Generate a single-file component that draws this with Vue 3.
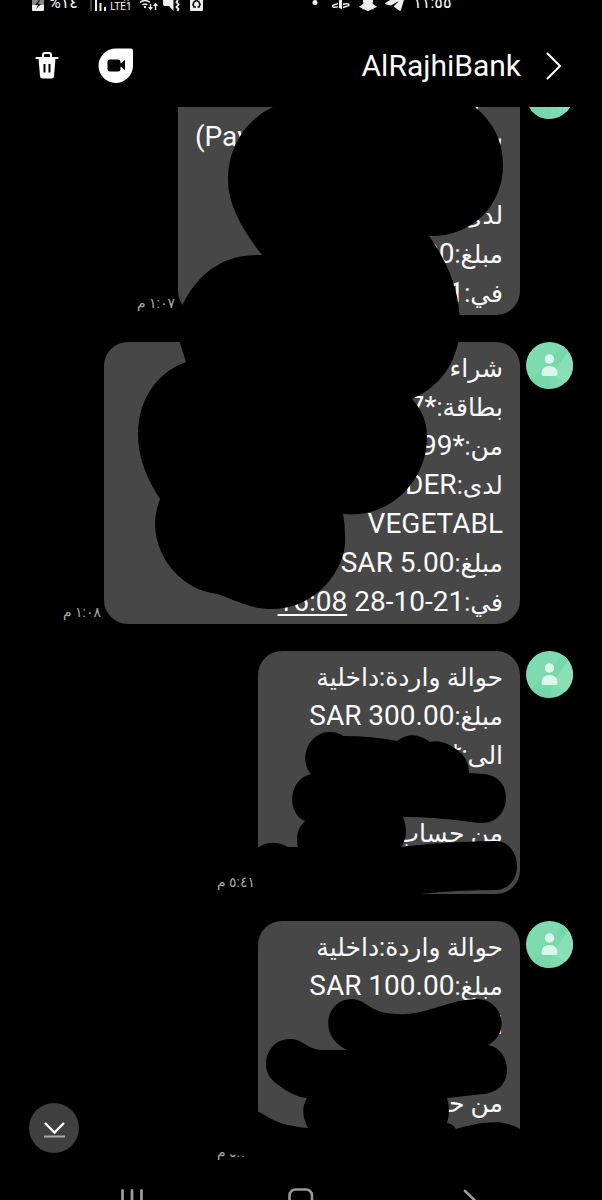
<script setup>
const messages = [
  {
    size: 'medium',
    time: '١:٠٧ م',
    lines: [
      { label: 'شراء' },
      { label: 'بطاقة', end: 'Pay)' },
      {},
      { label: 'لدى' },
      { label: 'مبلغ:', value: '00' },
      { label: 'في:', value: '21' },
    ],
  },
  {
    size: 'large',
    time: '١:٠٨ م',
    lines: [
      { label: 'شراء' },
      { label: 'بطاقة:', value: '*7' },
      { label: 'من:', value: '*99' },
      { label: 'لدى:', value: 'DER' },
      { value: 'VEGETABL' },
      { label: 'مبلغ:', value: 'SAR 5.00' },
      { label: 'في:', value: '21-10-28 ', link: '16:08' },
    ],
  },
  {
    size: 'small',
    time: '٥:٤١ م',
    lines: [
      { label: 'حوالة واردة:داخلية' },
      { label: 'مبلغ:', value: 'SAR 300.00' },
      { label: 'الى:', value: '*' },
      {},
      { label: 'من حساب' },
      {},
    ],
  },
  {
    size: 'small',
    time: '٥:٤٢ م',
    lines: [
      { label: 'حوالة واردة:داخلية' },
      { label: 'مبلغ:', value: 'SAR 100.00' },
      { label: 'الى:', value: '*' },
      {},
      { label: 'من حساب' },
      {},
    ],
  },
]
</script>

<template>
  <div class="screen">
    <div class="status">
      <div class="status-group">
        <svg width="12" height="12" viewBox="0 0 12 12"><path d="M0 0h12v10q0 1-1 1H1q-1 0-1-1z" fill="#eee"/><path d="M0 0h12v5H0z" fill="#888"/><path d="M7 0 3 5h3L4 9l5-5H6l2-4z" fill="#111"/></svg>
        <span class="status-text battery">%١٤</span>
        <svg class="signal" width="17" height="12" viewBox="0 0 17 12"><path d="M1 0v11" stroke="#555" stroke-width="1.500"/><path d="M6 0v11M10.500 3v8M15 7v4" stroke="#eee" stroke-width="2"/></svg>
        <span class="lte"><span>Vo))</span><span>LTE1</span></span>
        <svg class="wifi" width="18" height="12" viewBox="0 0 18 12"><path d="M0 2.500q5-4 10 0M2.500 5q2.500-2 5 0" fill="none" stroke="#eee" stroke-width="1.600"/><circle cx="5" cy="7" r="1.200" fill="#eee"/><path d="M10.500 4v5M15.500 10V5" stroke="#eee" stroke-width="1.400"/><path d="M8 7h5l-2.500 3.500zM13 6h5l-2.500-3.500z" fill="#eee"/></svg>
        <svg class="mute" width="18" height="12" viewBox="0 0 18 12"><path d="M0 0h10.500v11L6 6H1.500Q0 6 0 4z" fill="#eee"/><path d="M15 0l-1.500 2 2 2.500-2 2.500 2 2-1 2" fill="none" stroke="#eee" stroke-width="1.800"/></svg>
        <svg class="saver" width="13" height="12" viewBox="0 0 13 12"><path d="M0 0h13v10q0 1-1 1H1q-1 0-1-1z" fill="#eee"/><path d="M4.500 1 3 4.500 4 7h2M8.500 1 10 4.500 9 7H7.500M5 1.500 6.500 0 8 1.500" fill="none" stroke="#111" stroke-width="1.700"/></svg>
      </div>
      <div class="status-group">
        <svg class="dot" width="6" height="12" viewBox="0 0 6 12"><circle cx="3" cy="2.500" r="2.500" fill="#eee"/></svg>
        <svg class="ps" width="18" height="12" viewBox="0 0 18 12"><path d="M7 0v8l3 1V0z" fill="#eee"/><path d="M6 3.500 1 5.300Q-.500 6.500 2 7.200q2 .300 4-.600M11 7.500l5-1.600q2-1.200 0-2-2.500-.400-5 .400" fill="none" stroke="#eee" stroke-width="1.500"/></svg>
        <svg class="snap" width="18" height="12" viewBox="0 0 18 12"><path d="M4 0h10q.500 2-.500 3 1 2.500 4.500 3.500-.500 1.300-3 1.500l-.500 1.200q-2.200-.200-3.300.800-2.200 2-4.400 0-1.100-1-3.300-.800L3 8Q.500 7.800 0 6.500 3.500 5.500 4.500 3 3.500 2 4 0z" fill="#eee"/></svg>
        <svg class="telegram" width="19" height="12" viewBox="0 0 19 12"><path d="M5 0h14l-3 10q-.600 1.500-1.800.600L8.500 6.500 14 1 6 5.500.500 4.300Q-.500 3.700 1 2.500z" fill="#eee"/></svg>
        <span class="status-text clock">١١:٥٥</span>
      </div>
    </div>

    <header class="header">
      <div class="actions">
        <button class="icon-button" aria-label="حذف">
          <svg width="24" height="27" viewBox="0 0 24 27"><path d="M8 5V3q0-2 2-2h4q2 0 2 2v2" fill="none" stroke="#fff" stroke-width="2"/><path d="M1.500 6h21" stroke="#fff" stroke-width="2.200" stroke-linecap="round"/><path d="M3.500 6h17L19 24q-.300 2.500-2.500 2.500h-9Q5.300 26.500 5 24z" fill="#fff"/><path d="M9.500 12v8.500M14.500 12v8.500" stroke="#000" stroke-width="2"/></svg>
        </button>
        <button class="icon-button" aria-label="مكالمة فيديو">
          <svg width="36" height="36" viewBox="0 0 36 36"><path d="M18 .500h14.500q2.500 0 2.500 2.500v15A17.250 17.250 0 1 1 18 .500z" fill="#fff"/><path d="M12 11.500h8q2.500 0 2.500 2.500v1.500l4.500-3.500v10l-4.500-3.500V21q0 2.500-2.500 2.500h-8Q9.500 23.500 9.500 21v-7q0-2.500 2.500-2.500z" fill="#000"/></svg>
        </button>
      </div>
      <div class="contact">
        <h1 class="title">AlRajhiBank</h1>
        <button class="icon-button" aria-label="رجوع">
          <svg width="16" height="28" viewBox="0 0 16 28"><path d="m1.500 1.500 12.500 12.500L1.500 26.500" fill="none" stroke="#fff" stroke-width="2" stroke-linecap="round" stroke-linejoin="round"/></svg>
        </button>
      </div>
    </header>

    <main class="thread">
      <ul class="messages" dir="rtl">
        <li v-for="(m, i) in messages" :key="i" class="message">
          <svg class="avatar" viewBox="0 0 47 47" aria-hidden="true">
            <circle cx="23.500" cy="23.500" r="23.500" fill="#7edbb0"/>
            <path d="M37 4.200A23.500 23.500 0 0 1 40 40.200Q34 40 28 33z" fill="#8bdfb7"/>
            <path d="M37 4.200 5 38A23.500 23.500 0 0 0 24 47L26 34 42 9z" fill="#76d8aa"/>
            <circle cx="23.500" cy="17" r="4.700" fill="#dcf7e9"/>
            <path d="M15.500 31.500q0-7.500 8-7.500t8 7.500q0 2.500-2.500 2.500H18q-2.500 0-2.500-2.500z" fill="#dcf7e9"/>
          </svg>
          <div class="bubble" :class="m.size">
            <p v-for="(line, n) in m.lines" :key="n" class="line">
              <span><span class="label">{{ line.label }}</span>{{ line.value }}<a v-if="line.link" href="#" class="link">{{ line.link }}</a></span>
              <span v-if="line.end">{{ line.end }}</span>
            </p>
          </div>
          <time class="time">{{ m.time }}</time>
        </li>
      </ul>
      <svg class="marker" width="602" height="1057" viewBox="0 107 602 1057" aria-hidden="true">
        <path d="M273 107C245 120 228 148 228 180C228 206 243 230 262 255C218 253 194 280 182 306Q178 324 180 343L186 362C155 373 138 402 138 434C138 458 147 479 160 499Q155 512 155 525C156 560 184 591 218 594C236 601 252 609 272 609C318 609 348 566 345 536Q345 524 343 514C390 519 427 481 427 437Q427 415 412 399C436 388 452 370 458 343C464 309 455 272 429 236C472 237 503 206 503 165Q503 130 475 107Z"/>
        <path d="M330 732Q338 732 343 736Q372 736 397 741Q413 729 430 742Q440 739 453 747Q469 756 469 773L483 774C498 775 506 785 506 798C506 812 496 823 483 823C468 823 450 817 403 817Q410 834 401 847Q440 842 495 841C509 841 517 853 517 866C517 880 508 890 495 890Q458 890 420 894L380 900H280Q258 896 253 884Q248 862 257 848Q272 838 288 847H298Q294 831 305 821C287 814 287 780 311 774C298 760 308 732 330 732Z"/>
        <path d="M352 999C366 999 370 1014 397 1014C425 1016 450 999 477 999C502 999 512 1032 488 1045C500 1047 507 1058 507 1070C507 1084 497 1093 483 1094L447 1098Q451 1110 447 1123Q453 1124 456 1129C475 1124 500 1117 520 1129Q532 1145 525 1164H256L241 1155 225 1154V1128Q240 1104 257 1111C270 1117 275 1125 308 1128Q299 1112 307 1098Q293 1097 277 1084C257 1071 266 1039 290 1039C304 1039 306 1050 324 1050H347C317 1036 326 999 352 999Z"/>
      </svg>
      <button class="to-bottom" aria-label="الانتقال إلى الأسفل">
        <svg width="50" height="50" viewBox="0 0 50 50"><path d="m16 20 9.500 9.500L35 20" fill="none" stroke="#fff" stroke-width="2.400"/><path d="M15 33.500h21" stroke="#aaa" stroke-width="2"/></svg>
      </button>
    </main>

    <nav class="nav">
      <button class="nav-button" aria-label="التطبيقات الأخيرة">
        <svg width="24" height="24" viewBox="0 0 24 24"><path d="M2.500 2.500v20M12 2.500v20M21.500 2.500v20" stroke="#999" stroke-width="2.800" stroke-linecap="round"/></svg>
      </button>
      <button class="nav-button" aria-label="الشاشة الرئيسية">
        <svg width="26" height="24" viewBox="0 0 26 24"><rect x="1.500" y="1.500" width="22.500" height="22" rx="6" fill="none" stroke="#999" stroke-width="2.600"/></svg>
      </button>
      <button class="nav-button" aria-label="السابق">
        <svg width="14" height="24" viewBox="0 0 14 24"><path d="m2 3 11 10.500L2 24" fill="none" stroke="#999" stroke-width="2.600" stroke-linecap="round"/></svg>
      </button>
    </nav>
  </div>
</template>

<style>
body {
  background: #000;
}
</style>

<style scoped>
.screen {
  display: flex;
  flex-direction: column;
  height: 100vh;
  overflow: hidden;
  background: #000;
  color: #fafafa;
  font-family: Roboto, "Noto Sans", "DejaVu Sans", sans-serif;
}
button {
  display: flex;
  padding: 0;
  border: 0;
  background: none;
}
svg {
  display: block;
  flex: none;
}
.status {
  display: flex;
  justify-content: space-between;
  flex: none;
  height: 12px;
  padding: 0 25% 0 32px;
  overflow: hidden;
}
.status-group {
  display: flex;
  align-items: flex-end;
}
.status-text {
  font-size: 16px;
  line-height: 18px;
}
.battery {
  width: 36px;
  margin-left: 5px;
}
.signal {
  margin-left: 5px;
}
.lte {
  display: flex;
  flex-direction: column;
  align-items: center;
  width: 24px;
  margin-left: 2px;
  font-size: 10px;
  line-height: 11px;
}
.wifi { margin-left: 7px; }
.mute { margin-left: 5px; }
.saver { margin-left: 9px; }
.ps { margin-left: 14px; }
.snap { margin-left: 9px; }
.telegram { margin-left: 8px; }
.clock { margin-left: 9px; }
.header {
  display: flex;
  align-items: center;
  justify-content: space-between;
  flex: none;
  height: 95px;
  padding: 12px 40px 0 35px;
  box-sizing: border-box;
}
.actions {
  display: flex;
  align-items: center;
  gap: 39px;
}
.contact {
  display: flex;
  align-items: center;
  gap: 25px;
}
.title {
  margin: 0;
  font-size: 30px;
  font-weight: 400;
  line-height: 36px;
}
.thread {
  position: relative;
  display: flex;
  flex: 1;
  flex-direction: column;
  justify-content: flex-end;
  min-height: 0;
  overflow: hidden;
}
.messages {
  display: flex;
  flex-direction: column;
  gap: 27px;
  margin: 0;
  padding: 0 29px;
  list-style: none;
}
.message {
  display: flex;
}
.avatar {
  width: 47px;
  height: 47px;
  margin-left: 6px;
}
.bubble {
  flex: 0 1 auto;
  padding: 6px 17px 3px;
  border-radius: 24px;
  box-sizing: border-box;
  background: #474747;
}
.small { width: 262px; }
.medium { width: 342px; }
.large { width: 416px; }
.line {
  display: flex;
  justify-content: space-between;
  height: 39px;
  margin: 0;
  font-size: 28px;
  line-height: 39px;
  white-space: nowrap;
}
.label {
  font-size: 25px;
}
.link {
  color: inherit;
  text-decoration: underline;
  text-decoration-thickness: 2px;
  text-underline-offset: 3px;
}
.time {
  align-self: flex-end;
  margin: 0 3px 2px 0;
  color: #aaa;
  font-size: 14px;
  line-height: 20px;
  white-space: nowrap;
}
.marker {
  position: absolute;
  right: 0;
  bottom: 0;
  pointer-events: none;
}
.to-bottom {
  position: absolute;
  left: 29px;
  bottom: 11px;
  border-radius: 50%;
  background: #404040;
}
.nav {
  display: grid;
  grid-template-columns: repeat(3, 1fr);
  flex: none;
  height: 36px;
  padding: 24px 8% 0;
  box-sizing: border-box;
  overflow: hidden;
}
.nav-button {
  justify-content: center;
}
</style>
